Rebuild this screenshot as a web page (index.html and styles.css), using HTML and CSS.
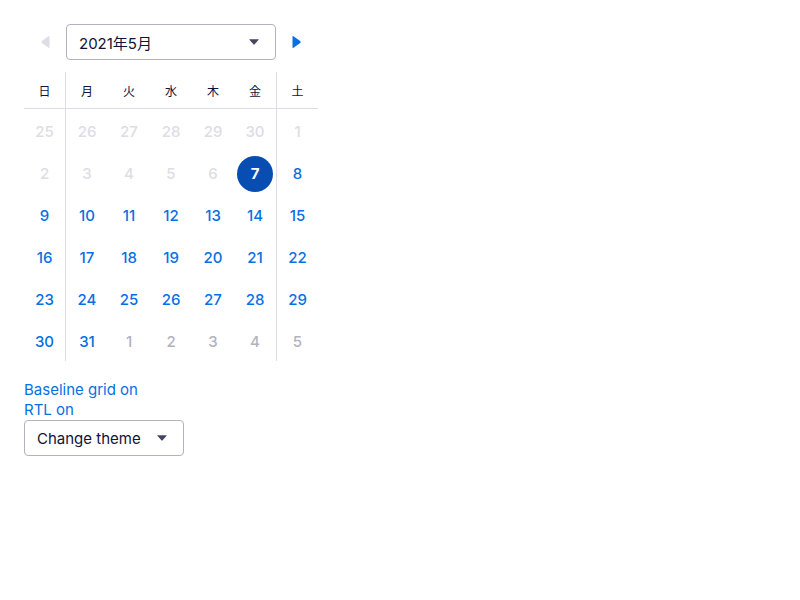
FILE: index.html
```html
<!DOCTYPE html>
<html lang="ja">
<head>
<meta charset="utf-8">
<link rel="stylesheet" href="styles.css">
</head>
<body>
<div class="cal">
  <div class="nav">
    <div class="nav-btn">
      <svg width="10" height="14" viewBox="0 0 10 14"><path d="M8.5 1.2 L1.8 6.1 Q0.8 7 1.8 7.9 L8.5 12.8 Q9.5 13.4 9.5 12.2 L9.5 1.8 Q9.5 0.6 8.5 1.2 Z" fill="#dddde5"/></svg>
    </div>
    <div class="select month-select">
      <span>2021年5月</span>
      <svg class="caret" width="10" height="6" viewBox="0 0 10 6"><path d="M0.6 0.2 H9.4 Q10 0.2 9.6 0.8 L5.6 5.3 Q5 6 4.4 5.3 L0.4 0.8 Q0 0.2 0.6 0.2 Z" fill="#444560"/></svg>
    </div>
    <div class="nav-btn">
      <svg width="10" height="14" viewBox="0 0 10 14"><path d="M1.5 1.2 L8.2 6.1 Q9.2 7 8.2 7.9 L1.5 12.8 Q0.5 13.4 0.5 12.2 L0.5 1.8 Q0.5 0.6 1.5 1.2 Z" fill="#0770e3"/></svg>
    </div>
  </div>
  <div class="grid">
    <div class="hd c1">日</div><div class="hd">月</div><div class="hd">火</div><div class="hd">水</div><div class="hd">木</div><div class="hd">金</div><div class="hd c7">土</div>

    <div class="d dis c1">25</div><div class="d dis">26</div><div class="d dis">27</div><div class="d dis">28</div><div class="d dis">29</div><div class="d dis">30</div><div class="d dis c7">1</div>

    <div class="d dis c1">2</div><div class="d dis">3</div><div class="d dis">4</div><div class="d dis">5</div><div class="d dis">6</div><div class="d"><span class="sel">7</span></div><div class="d c7">8</div>

    <div class="d c1">9</div><div class="d">10</div><div class="d">11</div><div class="d">12</div><div class="d">13</div><div class="d">14</div><div class="d c7">15</div>

    <div class="d c1">16</div><div class="d">17</div><div class="d">18</div><div class="d">19</div><div class="d">20</div><div class="d">21</div><div class="d c7">22</div>

    <div class="d c1">23</div><div class="d">24</div><div class="d">25</div><div class="d">26</div><div class="d">27</div><div class="d">28</div><div class="d c7">29</div>

    <div class="d c1">30</div><div class="d">31</div><div class="d out">1</div><div class="d out">2</div><div class="d out">3</div><div class="d out">4</div><div class="d out c7">5</div>
  </div>
</div>
<div class="links">
  <a class="link">Baseline grid on</a>
  <a class="link">RTL on</a>
</div>
<div class="select theme-select">
  <span>Change theme</span>
  <svg class="caret" width="10" height="6" viewBox="0 0 10 6"><path d="M0.6 0.2 H9.4 Q10 0.2 9.6 0.8 L5.6 5.3 Q5 6 4.4 5.3 L0.4 0.8 Q0 0.2 0.6 0.2 Z" fill="#444560"/></svg>
</div>
</body>
</html>
```

FILE: styles.css
```css
body {
  margin: 0;
  padding: 24px;
  font-family: "Inter", "Noto Sans CJK JP", sans-serif;
  color: #111236;
  background: #fff;
}
.cal {
  width: 294px;
}
.nav {
  display: flex;
  align-items: center;
  height: 36px;
}
.nav-btn {
  width: 42px;
  height: 36px;
  display: flex;
  align-items: center;
  justify-content: center;
}
.select {
  box-sizing: border-box;
  height: 36px;
  border: 1px solid #b2b2bf;
  border-radius: 4px;
  display: flex;
  align-items: center;
  justify-content: space-between;
  padding: 0 16px 0 12px;
  font-size: 15px;
  color: #111236;
}
.month-select {
  width: 210px;
}
.theme-select {
  width: 160px;
}
.grid {
  margin-top: 12px;
  display: grid;
  grid-template-columns: repeat(7, 42px);
  grid-template-rows: 37px repeat(6, 42px);
}
.grid .hd {
  border-bottom: 1px solid #dddde5;
  display: flex;
  align-items: center;
  justify-content: center;
  font-size: 12px;
  color: #111236;
}
.c1 { border-right: 1px solid #dddde5; }
.c7 { border-left: 1px solid #dddde5; }
.d {
  display: flex;
  align-items: center;
  justify-content: center;
  padding-top: 3px;
  box-sizing: border-box;
  font-size: 15px;
  font-weight: 500;
  color: #0770e3;
}
.d.dis { color: #dddde5; }
.d.out { color: #b2b2bf; }
.sel {
  width: 36px;
  height: 36px;
  border-radius: 50%;
  background: #084eb2;
  color: #fff;
  font-weight: 700;
  display: flex;
  align-items: center;
  justify-content: center;
}
.links {
  margin-top: 19px;
  display: flex;
  flex-direction: column;
}
.link {
  font-size: 15px;
  line-height: 20px;
  color: #0770e3;
}
```
